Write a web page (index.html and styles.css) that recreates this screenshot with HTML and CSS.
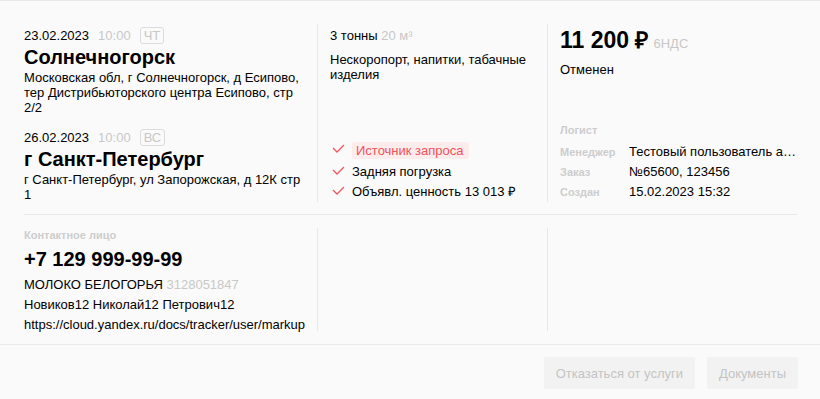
FILE: index.html
```html
<!DOCTYPE html>
<html lang="ru">
<head>
<meta charset="utf-8">
<link rel="stylesheet" href="styles.css">
</head>
<body>
<div class="card">
  <div class="grid row-top">
    <div class="cell c1">
      <div class="point">
        <div class="when"><span class="date">23.02.2023</span><span class="time">10:00</span><span class="day">ЧТ</span></div>
        <div class="city">Солнечногорск</div>
        <div class="addr">Московская обл, г Солнечногорск, д Есипово, тер Дистрибьюторского центра Есипово, стр 2/2</div>
      </div>
      <div class="point second">
        <div class="when"><span class="date">26.02.2023</span><span class="time">10:00</span><span class="day">ВС</span></div>
        <div class="city">г Санкт-Петербург</div>
        <div class="addr">г Санкт-Петербург, ул Запорожская, д 12К стр 1</div>
      </div>
    </div>
    <div class="cell c2">
      <div class="cargo-top">
        <div class="weight">3 тонны <span class="muted">20 м³</span></div>
        <div class="goods">Нескоропорт, напитки, табачные изделия</div>
      </div>
      <ul class="checks">
        <li class="check first"><svg class="tick" width="16" height="12" viewBox="0 0 16 12"><polyline points="3,4 7,8 14,1" /></svg><span class="alert">Источник запроса</span></li>
        <li class="check"><svg class="tick" width="16" height="12" viewBox="0 0 16 12"><polyline points="3,4 7,8 14,1" /></svg><span>Задняя погрузка</span></li>
        <li class="check"><svg class="tick" width="16" height="12" viewBox="0 0 16 12"><polyline points="3,4 7,8 14,1" /></svg><span>Объявл. ценность 13 013 ₽</span></li>
      </ul>
    </div>
    <div class="cell c3">
      <div class="price-block">
        <div class="price"><span class="sum">11 200 ₽</span><span class="vat">6НДС</span></div>
        <div class="status">Отменен</div>
      </div>
      <div class="info">
        <div class="info-row lone"><span class="label">Логист</span><span class="value"></span></div>
        <div class="info-row"><span class="label">Менеджер</span><span class="value">Тестовый пользователь администратор</span></div>
        <div class="info-row"><span class="label">Заказ</span><span class="value">№65600, 123456</span></div>
        <div class="info-row"><span class="label">Создан</span><span class="value">15.02.2023 15:32</span></div>
      </div>
    </div>
  </div>
  <div class="hr"></div>
  <div class="grid row-bottom">
    <div class="cell c1">
      <div class="contact">
        <div class="label">Контактное лицо</div>
        <div class="phone">+7 129 999-99-99</div>
        <div class="line">МОЛОКО БЕЛОГОРЬЯ <span class="muted">3128051847</span></div>
        <div class="line">Новиков12 Николай12 Петрович12</div>
        <div class="line">https://cloud.yandex.ru/docs/tracker/user/markup</div>
      </div>
    </div>
    <div class="cell c2"></div>
    <div class="cell c3"></div>
  </div>
</div>
<div class="footer">
  <button class="btn">Отказаться от услуги</button>
  <button class="btn">Документы</button>
</div>
</body>
</html>
```
FILE: styles.css
```css
html, body {
  margin: 0;
  padding: 0;
}
body {
  background: #fafafa;
  font-family: "Liberation Sans", Arial, sans-serif;
  font-size: 13px;
  color: #000;
  border-top: 1px solid #e8e8e8;
  width: 820px;
  height: 398px;
  overflow: hidden;
}
.card {
  padding: 23px 23px 0 24px;
  border-bottom: 1px solid #ebebeb;
}
.grid {
  display: grid;
  grid-template-columns: 294px 230px 249px;
}
.cell {
  box-sizing: border-box;
  min-width: 0;
}
.c1, .c2 {
  border-right: 1px solid #e8e8e8;
}
.c2, .c3 {
  padding-left: 12px;
}
.c1 {
  padding-right: 12px;
}
.c2 {
  padding-right: 12px;
}
.row-top .cell {
  padding-top: 3px;
}
.row-top .c2, .row-top .c3 {
  display: flex;
  flex-direction: column;
  justify-content: space-between;
}
.hr {
  height: 1px;
  background: #e8e8e8;
  margin: 12px 0 13px;
}
.row-bottom {
  padding-bottom: 13px;
}
.when {
  display: flex;
  align-items: center;
  height: 17px;
  line-height: 17px;
}
.time {
  color: #c8c8c8;
  margin-left: 9px;
}
.day {
  margin-left: 9px;
  border: 1px solid #dcdcdc;
  border-radius: 3px;
  color: #c8c8c8;
  line-height: 15px;
  padding: 0 3px;
}
.city {
  font-size: 20px;
  font-weight: bold;
  line-height: 26px;
}
.addr {
  line-height: 15px;
}
.second {
  margin-top: 14px;
}
.muted {
  color: #c8c8c8;
}
.weight {
  line-height: 17px;
}
.goods {
  margin-top: 8px;
  line-height: 15px;
}
.checks {
  list-style: none;
  margin: 0;
  padding: 0;
}
.check {
  display: flex;
  align-items: center;
  height: 20px;
  line-height: 20px;
}
.check.first {
  margin-bottom: 2px;
}
.tick {
  flex: none;
  margin-right: 6px;
}
.tick polyline {
  fill: none;
  stroke: #f0565c;
  stroke-width: 1.3;
}
.alert {
  background: #fcecec;
  color: #f0525b;
  line-height: 17px;
  padding: 0 5px 0 4px;
  border-radius: 2px;
}
.price {
  line-height: 26px;
}
.sum {
  font-size: 23px;
  font-weight: bold;
}
.vat {
  font-size: 13px;
  color: #c8c8c8;
  margin-left: 5px;
}
.status {
  margin-top: 4px;
  line-height: 17px;
}
.info-row {
  display: flex;
  height: 20px;
  line-height: 20px;
  align-items: baseline;
}
.info-row.lone {
  height: 16px;
  line-height: 16px;
  margin-bottom: 4px;
}
.label {
  font-size: 11px;
  font-weight: bold;
  color: #cdcdcd;
}
.info .label {
  width: 69px;
  flex: none;
}
.value {
  flex: 1;
  min-width: 0;
  white-space: nowrap;
  overflow: hidden;
  text-overflow: ellipsis;
}
.contact .label {
  line-height: 14px;
}
.phone {
  margin: 5px 0 4px;
  font-size: 20px;
  font-weight: bold;
  line-height: 24px;
}
.contact .line {
  line-height: 20px;
  white-space: nowrap;
}
.row-bottom .cell {
  height: 103px;
}
.footer {
  display: flex;
  justify-content: flex-end;
  gap: 12px;
  padding: 12px 22px 0 0;
}
.btn {
  height: 32px;
  border: none;
  border-radius: 2px;
  background: #f2f2f2;
  color: #c4c4c4;
  font-family: "Liberation Sans", Arial, sans-serif;
  font-size: 13px;
  padding: 0 12px;
}
```
